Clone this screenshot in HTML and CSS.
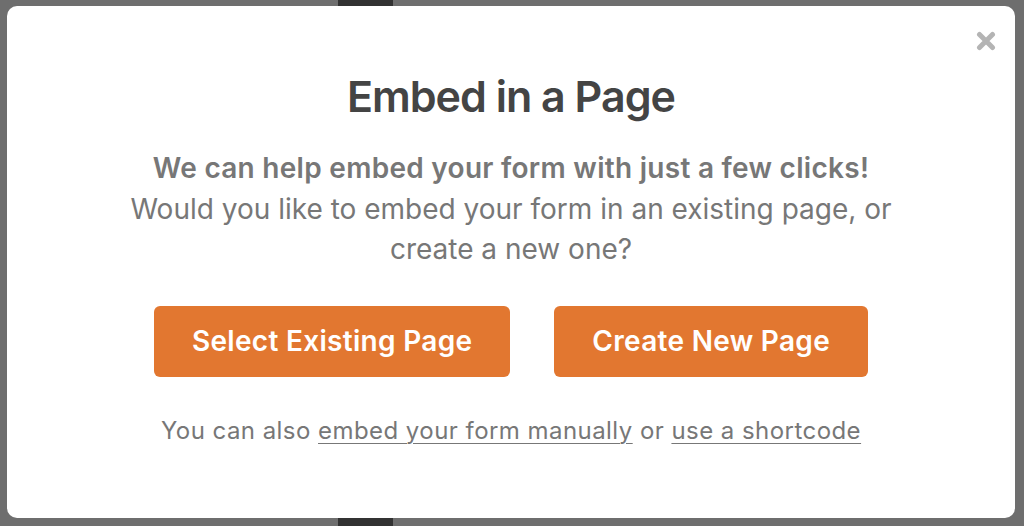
FILE: index.html
```html
<!DOCTYPE html>
<html lang="en">
<head>
<meta charset="utf-8">
<title>Embed in a Page</title>
<link rel="stylesheet" href="styles.css">
</head>
<body>
<div class="backdrop">
  <div class="modal">
    <button class="close" aria-label="Close">
      <svg viewBox="0 0 20 20" width="20" height="20"><path d="M3.5 3.5 L16.5 16.5 M16.5 3.5 L3.5 16.5" stroke="#b4b4b4" stroke-width="5" stroke-linecap="round" fill="none"/></svg>
    </button>
    <h1 class="title">Embed in a Page</h1>
    <p class="lead"><strong>We can help embed your form with just a few clicks!</strong><br>Would you like to embed your form in an existing page, or<br>create a new one?</p>
    <div class="actions">
      <button class="btn">Select Existing Page</button>
      <button class="btn">Create New Page</button>
    </div>
    <p class="alt">You can also <a href="#">embed your form manually</a> or <a href="#">use a shortcode</a></p>
  </div>
</div>
</body>
</html>
```

FILE: styles.css
```css
html, body {
  margin: 0;
  padding: 0;
  height: 100%;
}

body {
  font-family: Inter, "Noto Sans", "Liberation Sans", sans-serif;
}

.backdrop {
  box-sizing: border-box;
  height: 526px;
  width: 1024px;
  padding: 6px 9px 8px 7px;
  background: linear-gradient(to right, #6e6e6e 338px, #323232 338px, #323232 393px, #6e6e6e 393px);
  display: flex;
}

.modal {
  position: relative;
  flex: 1;
  background: #ffffff;
  border-radius: 10px;
  padding-top: 64px;
  display: flex;
  flex-direction: column;
  align-items: center;
  text-align: center;
}

.close {
  position: absolute;
  top: 25px;
  right: 19px;
  width: 20px;
  height: 20px;
  padding: 0;
  border: 0;
  background: none;
  cursor: pointer;
  display: flex;
}

.title {
  margin: 0;
  font-size: 43px;
  line-height: 52px;
  font-weight: 600;
  color: #444444;
  letter-spacing: -1px;
}

.lead {
  margin: 26px 0 0;
  font-size: 28px;
  line-height: 40.5px;
  color: #777777;
  font-weight: 400;
}

.lead strong {
  font-weight: 600;
  letter-spacing: 0.28px;
}

.actions {
  margin-top: 36px;
  display: flex;
  gap: 44px;
}

.btn {
  height: 71px;
  padding: 0 38px;
  border: 0;
  border-radius: 6px;
  background: #e27730;
  color: #ffffff;
  font-family: inherit;
  font-size: 28px;
  font-weight: 600;
  letter-spacing: 0.3px;
  cursor: pointer;
}

.alt {
  margin: 37px 0 0;
  font-size: 24px;
  line-height: 34px;
  color: #777777;
  letter-spacing: 0.45px;
}

.alt a {
  color: #777777;
  text-decoration: underline;
  text-underline-offset: 4px;
  text-decoration-thickness: 1px;
}
```
